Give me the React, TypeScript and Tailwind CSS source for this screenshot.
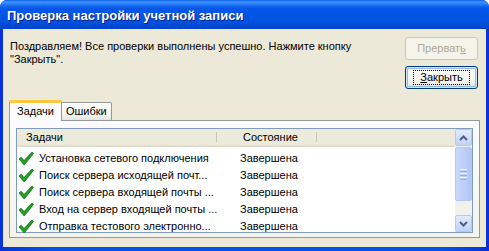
import React from "react";

const Check = () => (
  <svg width="16" height="15" viewBox="0 0 16 15" className="shrink-0">
    <path d="M1 8 L3.2 6.3 L6 9.6 L14 1 L15.6 2.4 L6.2 14 Z" fill="#22a022" stroke="#137313" strokeWidth="0.8" strokeLinejoin="round" />
  </svg>
);

const rows = [
  "Установка сетевого подключения",
  "Поиск сервера исходящей почт...",
  "Поиск сервера входящей почты ...",
  "Вход на сервер входящей почты ...",
  "Отправка тестового электронно...",
];

export default function App() {
  return (
    <div
      className="w-[489px] h-[251px] overflow-hidden bg-white"
      style={{ fontFamily: '"Liberation Sans", Arial, sans-serif' }}
    >
      <div className="w-[489px] h-[251px] flex flex-col rounded-t-[7px] bg-[linear-gradient(to_right,#0831d9,#0054e3_10%,#0054e3_90%,#0831d9)] overflow-hidden">
        <div className="h-[29px] shrink-0 flex items-center pl-[7px] bg-[linear-gradient(to_bottom,#0a5fe8_0px,#3d95ff_2px,#2a7cf5_4px,#0658ea_8px,#0054e3_16px,#0052e0_22px,#0043c8_28px)]">
          <span className="text-white font-bold text-[13px] [text-shadow:1px_1px_0_#0a1c8c] leading-none mt-[1px]">
            Проверка настройки учетной записи
          </span>
        </div>
        <div className="flex-1 ml-[3px] mr-[3px] mb-[4px] bg-[#ece9d8] flex flex-col text-[11px] text-black">
          <div className="flex pt-[8px]">
            <div className="pl-[7px] pt-[3px] leading-[13px] w-[380px]">
              Поздравляем! Все проверки выполнены успешно. Нажмите кнопку "Закрыть".
            </div>
            <div className="flex flex-col gap-[6px] ml-auto mr-[8px] mt-[0px]">
              <div className="w-[73px] h-[23px] rounded-[3px] border border-[#cac8bb] bg-[#f5f4ea] text-[#aca899] flex items-center justify-center">
                Прерват<span className="underline">ь</span>
              </div>
              <div className="w-[73px] h-[23px] rounded-[3px] border border-[#003c74] bg-[linear-gradient(to_bottom,#ffffff,#f0f0ea_80%,#d6d0c5)] shadow-[inset_0_0_0_1px_#cee7ff,inset_0_0_0_2px_#98b8ea] flex items-center justify-center">
                <span className="outline outline-1 outline-dotted outline-black px-[6px] leading-[13px]">
                  <span className="underline">З</span>акрыть
                </span>
              </div>
            </div>
          </div>
          <div className="ml-[6px] mr-[6px] mt-[10px] flex flex-col">
            <div className="flex items-end h-[21px]">
              <div className="h-[21px] px-[7px] bg-[#fcfcfe] border-x border-[#919b9c] rounded-t-[2px] border-t-[3px] border-t-[#ffc83c] flex items-center relative z-10 -mb-px pb-[1px]">
                Задачи
              </div>
              <div className="h-[18px] px-[4px] bg-[linear-gradient(to_bottom,#fefefe,#f4f3ee_70%,#e5e4dc)] border-t border-r border-[#919b9c] rounded-tr-[2px] flex items-center">
                Ошибки
              </div>
            </div>
            <div className="h-[118px] border border-[#919b9c] bg-[linear-gradient(to_bottom,#fcfcfe,#f4f3ee)] px-[6px] pt-[7px]">
              <div className="h-[105px] border border-[#7f9db9] bg-white flex">
                <div className="flex-1 flex flex-col">
                  <div className="h-[18px] flex bg-[#ebeadb] border-b-[2px] border-[#e2decd] shrink-0">
                    <div className="w-[200px] pl-[9px] flex items-center border-r border-[#c7c5b2] my-[3px]">Задачи</div>
                    <div className="w-[100px] pl-[26px] flex items-center border-r border-[#c7c5b2] my-[3px]">Состояние</div>
                  </div>
                  <div className="flex flex-col pt-[3px]">
                    {rows.map((r) => (
                      <div key={r} className="h-[17px] flex items-center">
                        <div className="w-[200px] flex items-center pl-[1px] gap-[5px]">
                          <Check />
                          <span className="whitespace-nowrap">{r}</span>
                        </div>
                        <div className="pl-[23px]">Завершена</div>
                      </div>
                    ))}
                  </div>
                </div>
                <div className="w-[17px] bg-[#f3f1ec] flex flex-col shrink-0">
                  <div className="h-[17px] rounded-[2px] border border-[#b4c8f6] bg-[linear-gradient(to_bottom,#e1eafe,#c1d3fb)] flex items-center justify-center">
                    <svg width="9" height="6" viewBox="0 0 9 6"><path d="M1 5 L4.5 1.5 L8 5" fill="none" stroke="#4d6185" strokeWidth="2" /></svg>
                  </div>
                  <div className="h-[54px] mt-[1px] rounded-[2px] border border-[#b4c8f6] bg-[linear-gradient(to_right,#c9d8fc,#bccdf9_60%,#b0c5f6)] flex flex-col items-center justify-center gap-[1px]">
                    <div className="w-[7px] h-[1px] bg-[#eef4fe]" />
                    <div className="w-[7px] h-[1px] bg-[#8cb0f8]" />
                    <div className="w-[7px] h-[1px] bg-[#eef4fe]" />
                    <div className="w-[7px] h-[1px] bg-[#8cb0f8]" />
                    <div className="w-[7px] h-[1px] bg-[#eef4fe]" />
                    <div className="w-[7px] h-[1px] bg-[#8cb0f8]" />
                  </div>
                  <div className="flex-1" />
                  <div className="h-[17px] rounded-[2px] border border-[#b4c8f6] bg-[linear-gradient(to_bottom,#e1eafe,#c1d3fb)] flex items-center justify-center">
                    <svg width="9" height="6" viewBox="0 0 9 6"><path d="M1 1 L4.5 4.5 L8 1" fill="none" stroke="#4d6185" strokeWidth="2" /></svg>
                  </div>
                </div>
              </div>
            </div>
          </div>
        </div>
      </div>
    </div>
  );
}
